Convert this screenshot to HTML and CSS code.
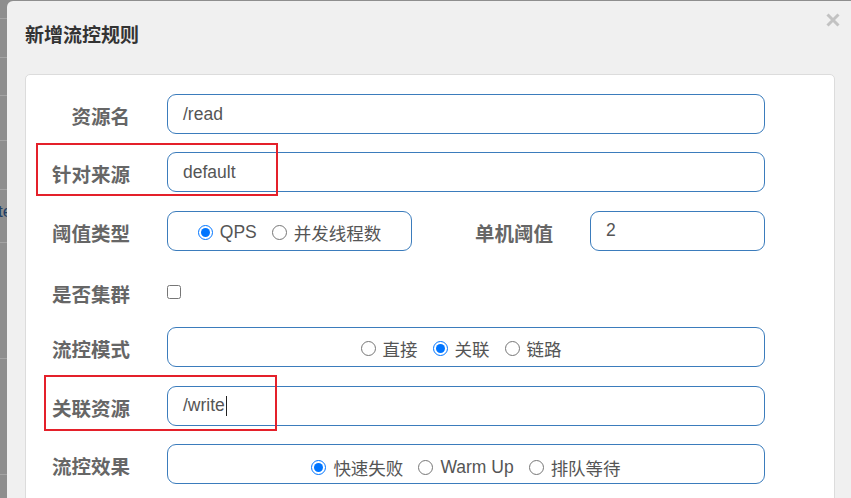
FILE: index.html
```html
<!DOCTYPE html>
<html lang="zh-CN">
<head>
<meta charset="utf-8">
<title>新增流控规则</title>
<link rel="stylesheet" href="styles.css">
</head>
<body>
<div class="page">
  <div class="bg-row h18"></div>
  <div class="bg-row h39"></div>
  <div class="bg-row h38"></div>
  <div class="bg-row h45"></div>
  <div class="bg-row h49"></div>
  <div class="bg-row h52"><span class="bg-text">te</span></div>
  <div class="bg-row h116"></div>
  <div class="bg-row h116"></div>
</div>

<div class="modal">
  <div class="modal-header">
    <h4 class="modal-title">新增流控规则</h4>
    <svg class="close" width="14" height="14" viewBox="0 0 14 14" aria-label="close">
      <path d="M1.5 1.5 L12.5 12.5 M12.5 1.5 L1.5 12.5" stroke="#c2c2c2" stroke-width="3" stroke-linecap="butt" fill="none"/>
    </svg>
  </div>

  <div class="panel">
    <div class="row">
      <label class="lbl">资源名</label>
      <div class="field">/read</div>
    </div>
    <div class="row">
      <label class="lbl">针对来源</label>
      <div class="field">default</div>
    </div>
    <div class="row">
      <label class="lbl">阈值类型</label>
      <div class="field radios narrow">
        <label class="opt"><input type="radio" name="grade" checked><span>QPS</span></label>
        <label class="opt"><input type="radio" name="grade"><span>并发线程数</span></label>
      </div>
      <label class="lbl lbl2">单机阈值</label>
      <div class="field small">2</div>
    </div>
    <div class="row check-row">
      <label class="lbl">是否集群</label>
      <input class="check" type="checkbox">
    </div>
    <div class="row">
      <label class="lbl">流控模式</label>
      <div class="field radios mode">
        <label class="opt"><input type="radio" name="strategy"><span>直接</span></label>
        <label class="opt"><input type="radio" name="strategy" checked><span>关联</span></label>
        <label class="opt"><input type="radio" name="strategy"><span>链路</span></label>
      </div>
    </div>
    <div class="row">
      <label class="lbl">关联资源</label>
      <div class="field">/write<span class="caret"></span></div>
    </div>
    <div class="row">
      <label class="lbl">流控效果</label>
      <div class="field radios low">
        <label class="opt"><input type="radio" name="behavior" checked><span>快速失败</span></label>
        <label class="opt"><input type="radio" name="behavior"><span>Warm Up</span></label>
        <label class="opt"><input type="radio" name="behavior"><span>排队等待</span></label>
      </div>
    </div>
  </div>
</div>

<div class="mark mark-source"></div>
<div class="mark mark-ref"></div>
</body>
</html>
```

FILE: styles.css
```css
html, body {
  margin: 0;
  padding: 0;
}
body {
  position: relative;
  width: 851px;
  height: 498px;
  overflow: hidden;
  background: #8e8e8e;
  font-family: "Liberation Sans", "Noto Sans CJK SC", sans-serif;
}

/* backdrop page */
.page {
  width: 100%;
}
.bg-row {
  border-bottom: 1px solid #a4a4a4;
  box-sizing: border-box;
  position: relative;
}
.h18 { height: 19px; }
.h39 { height: 39px; }
.h38 { height: 38px; }
.h45 { height: 45px; }
.h49 { height: 49px; }
.h52 { height: 53px; }
.h116 { height: 116px; }
.bg-text {
  position: absolute;
  left: -2px;
  top: 12px;
  font-size: 17px;
  color: #1f3f66;
}

/* modal */
.modal {
  position: absolute;
  left: 7px;
  top: 1px;
  width: 852px;
  height: 520px;
  background: #f0f0f0;
  border-radius: 6px 0 0 0;
}
.modal-header {
  display: flex;
  justify-content: space-between;
  align-items: flex-start;
  padding: 20px 19px 0 18px;
  height: 73px;
  box-sizing: border-box;
}
.modal-title {
  margin: 0;
  font-family: "Noto Sans CJK SC", sans-serif;
  font-weight: bold;
  font-size: 19px;
  line-height: 26px;
  color: #333;
}
.close {
  display: block;
  margin-top: -8px;
}

.panel {
  margin-left: 18px;
  width: 810px;
  box-sizing: border-box;
  background: #fff;
  border: 1px solid #dcdcdc;
  border-radius: 5px;
  padding-top: 19px;
  height: 460px;
}

.row {
  display: flex;
  align-items: center;
  height: 40px;
  margin-bottom: 18.33px;
}
.lbl {
  width: 104px;
  flex: none;
  margin-right: 37px;
  padding-top: 4px;
  box-sizing: border-box;
  text-align: right;
  font-family: "Noto Sans CJK SC", sans-serif;
  font-weight: bold;
  font-size: 19.5px;
  line-height: 36px;
  color: #666;
}
.lbl2 {
  width: 141px;
}

.field {
  width: 598px;
  height: 40px;
  flex: none;
  box-sizing: border-box;
  border: 1px solid #3b7cbc;
  border-radius: 9px;
  padding-left: 15px;
  display: flex;
  align-items: center;
  font-size: 17.5px;
  color: #555;
}
.field.narrow {
  width: 245px;
}
.field.small {
  width: 175px;
}
.radios {
  justify-content: center;
  gap: 15px;
  padding-left: 0;
  padding-top: 4px;
}
.radios.mode {
  padding-top: 2px;
  padding-right: 10px;
}
.radios.low {
  padding-top: 7px;
}
.opt {
  display: inline-flex;
  align-items: center;
  gap: 7px;
  font-size: 17.5px;
  color: #555;
}
.opt input {
  width: 15px;
  height: 15px;
  margin: 0;
}

.check-row {
  padding-top: 6px;
  box-sizing: border-box;
}
.check {
  width: 14px;
  height: 14px;
  margin: 0;
}

.caret {
  display: inline-block;
  width: 1px;
  height: 20px;
  background: #222;
  margin-left: 1px;
}

/* red annotation boxes */
.mark {
  position: absolute;
  box-sizing: border-box;
  border: 2px solid #e4202a;
}
.mark-source {
  left: 36px;
  top: 143px;
  width: 242px;
  height: 53px;
}
.mark-ref {
  left: 44px;
  top: 375px;
  width: 233px;
  height: 56px;
}
```
